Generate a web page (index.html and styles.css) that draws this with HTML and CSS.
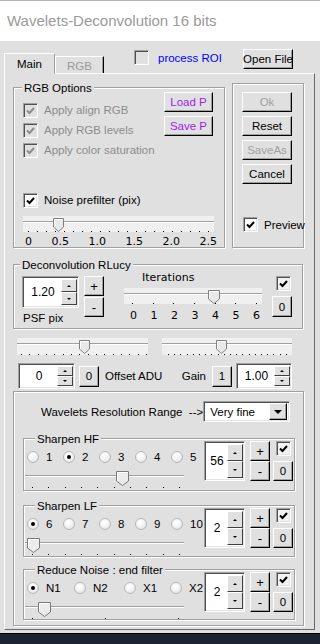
FILE: index.html
```html
<!DOCTYPE html>
<html>
<head>
<meta charset="utf-8">
<title>Wavelets-Deconvolution 16 bits</title>
<link rel="stylesheet" href="styles.css">
</head>
<body>
<div class="win">
  <div class="titlebar">Wavelets-Deconvolution 16 bits</div>
  <div class="client">
    <div class="topstrip">
      <div class="tabs">
        <div class="tab sel">Main</div>
        <div class="tab other">RGB</div>
      </div>
      <div class="roi"><span class="cb graybg"></span><span class="roi-t">process ROI</span></div>
      <div class="btn openfile">Open File</div>
    </div>

    <div class="pane">
      <div class="rowA">
        <div class="group rgbg">
          <div class="legend">RGB Options</div>
          <div class="rgbtop">
            <div class="checks">
              <div class="chkrow dis"><span class="cb graybg"><svg class="ck" viewBox="0 0 11 11"><path d="M2 5.5L4.5 8L9 3" fill="none" stroke="#8c8c8c" stroke-width="2"/></svg></span>Apply align RGB</div>
              <div class="chkrow dis"><span class="cb graybg"><svg class="ck" viewBox="0 0 11 11"><path d="M2 5.5L4.5 8L9 3" fill="none" stroke="#8c8c8c" stroke-width="2"/></svg></span>Apply RGB levels</div>
              <div class="chkrow dis"><span class="cb graybg"><svg class="ck" viewBox="0 0 11 11"><path d="M2 5.5L4.5 8L9 3" fill="none" stroke="#8c8c8c" stroke-width="2"/></svg></span>Apply color saturation</div>
            </div>
            <div class="btncol">
              <div class="btn purple w49">Load P</div>
              <div class="btn purple w49">Save P</div>
            </div>
          </div>
          <div class="chkrow noise"><span class="cb"><svg class="ck" viewBox="0 0 11 11"><path d="M2 5.5L4.5 8L9 3" fill="none" stroke="#000" stroke-width="2"/></svg></span>Noise prefilter (pix)</div>
          <div class="slider light s-noise">
            <div class="track"></div>
            <div class="ticks t-noise"><i></i><i></i><i></i><i></i><i></i><i></i><i></i><i></i><i></i><i></i><i></i><i></i><i></i><i></i><i></i><i></i><i></i><i></i><i></i><i></i><i></i></div>
            <svg class="thumb" style="left:30px" width="11" height="14" viewBox="0 0 11 14"><path d="M0.5 0.5H10.5V9L5.5 13.5L0.5 9Z" fill="#e8e8e8" stroke="#808080"/><path d="M1.5 9V1.5H9.5" fill="none" stroke="#fff"/></svg>
          </div>
          <div class="scale sc-noise"><span>0</span><span>0.5</span><span>1.0</span><span>1.5</span><span>2.0</span><span>2.5</span></div>
        </div>

        <div class="group rightg">
          <div class="btn w50 distext">Ok</div>
          <div class="btn w50">Reset</div>
          <div class="btn w50 distext">SaveAs</div>
          <div class="btn w50">Cancel</div>
          <div class="chkrow preview"><span class="cb"><svg class="ck" viewBox="0 0 11 11"><path d="M2 5.5L4.5 8L9 3" fill="none" stroke="#000" stroke-width="2"/></svg></span>Preview</div>
        </div>
      </div>

      <div class="group decon">
        <div class="legend lg-decon">Deconvolution RLucy</div>
        <div class="dcrow">
          <div class="col1">
            <div class="spin sp-psf"><span class="val">1.20</span><div class="spb"><div class="sb"><i class="up"></i></div><div class="sb"><i class="dn"></i></div></div></div>
            <div class="psf">PSF pix</div>
          </div>
          <div class="pm">
            <div class="btn sq">+</div>
            <div class="btn sq">-</div>
          </div>
          <div class="iter">
            <div class="iter-l">Iterations</div>
            <div class="slider light s-iter">
              <div class="track"></div>
              <div class="ticks t-iter"><i></i><i></i><i></i><i></i><i></i><i></i><i></i></div>
              <svg class="thumb" style="left:84px" width="12" height="14" viewBox="0 0 12 14"><path d="M0.5 0.5H11.5V9L6 13.5L0.5 9Z" fill="#e8e8e8" stroke="#808080"/><path d="M1.5 9V1.5H10.5" fill="none" stroke="#fff"/></svg>
            </div>
            <div class="scale sc-iter"><span>0</span><span>1</span><span>2</span><span>3</span><span>4</span><span>5</span><span>6</span></div>
          </div>
          <div class="cz">
            <span class="cb lightbg"><svg class="ck" viewBox="0 0 11 11"><path d="M2 5.5L4.5 8L9 3" fill="none" stroke="#000" stroke-width="2"/></svg></span>
            <div class="btn sq z21">0</div>
          </div>
        </div>
      </div>

      <div class="sliders">
        <div class="slider light s-c1">
          <div class="track"></div>
          <div class="ticks t-c1"><i></i><i></i><i></i><i></i><i></i><i></i><i></i><i></i><i></i><i></i><i></i><i></i><i></i><i></i><i></i><i></i></div>
          <svg class="thumb" style="left:62px" width="11" height="14" viewBox="0 0 11 14"><path d="M0.5 0.5H10.5V9L5.5 13.5L0.5 9Z" fill="#e8e8e8" stroke="#808080"/><path d="M1.5 9V1.5H9.5" fill="none" stroke="#fff"/></svg>
        </div>
        <div class="slider light s-c2">
          <div class="track"></div>
          <div class="ticks t-c2"><i></i><i></i><i></i><i></i><i></i><i></i><i></i><i></i><i></i><i></i><i></i><i></i><i></i><i></i><i></i><i></i><i></i><i></i><i></i><i></i></div>
          <svg class="thumb" style="left:54px" width="11" height="14" viewBox="0 0 11 14"><path d="M0.5 0.5H10.5V9L5.5 13.5L0.5 9Z" fill="#e8e8e8" stroke="#808080"/><path d="M1.5 9V1.5H9.5" fill="none" stroke="#fff"/></svg>
        </div>
      </div>

      <div class="offrow">
        <div class="spin sp-off"><span class="val">0</span><div class="spb"><div class="sb"><i class="up"></i></div><div class="sb"><i class="dn"></i></div></div></div>
        <div class="btn sq z21 ml4">0</div>
        <span class="offl">Offset ADU</span>
        <span class="spacer"></span>
        <span>Gain</span>
        <div class="btn sq z21 ml6">1</div>
        <div class="spin sp-gain"><span class="val">1.00</span><div class="spb"><div class="sb"><i class="up"></i></div><div class="sb"><i class="dn"></i></div></div></div>
      </div>

      <div class="group wpanel">
        <div class="wrrow">
          <span class="wrl">Wavelets Resolution Range&nbsp; --&gt;</span>
          <div class="dd"><span>Very fine</span><div class="ddbtn"><i class="ddar"></i></div></div>
        </div>

        <div class="group sub hf">
          <div class="legend lg-sub">Sharpen HF</div>
          <div class="subrow">
            <div class="lc">
              <div class="radios">
                <div class="ri"><span class="rb"></span>1</div>
                <div class="ri"><span class="rb on"></span>2</div>
                <div class="ri"><span class="rb"></span>3</div>
                <div class="ri"><span class="rb"></span>4</div>
                <div class="ri"><span class="rb"></span>5</div>
              </div>
              <div class="slider plain">
                <div class="track"></div>
                <div class="ticks t-w10"><i></i><i></i><i></i><i></i><i></i><i></i><i></i><i></i><i></i><i></i></div>
                <svg class="thumb" style="left:91px" width="13" height="15" viewBox="0 0 13 15"><path d="M0.5 0.5H12.5V10L6.5 14.5L0.5 10Z" fill="#ececec" stroke="#7a7a7a"/><path d="M1.5 10V1.5H11.5" fill="none" stroke="#fff"/></svg>
              </div>
            </div>
            <div class="spin sp-w"><span class="val">56</span><div class="spb"><div class="sb"><i class="up"></i></div><div class="sb"><i class="dn"></i></div></div></div>
            <div class="pm2"><div class="btn sq">+</div><div class="btn sq">-</div></div>
            <div class="cz2">
              <span class="cb lightbg"><svg class="ck" viewBox="0 0 11 11"><path d="M2 5.5L4.5 8L9 3" fill="none" stroke="#000" stroke-width="2"/></svg></span>
              <div class="btn sq">0</div>
            </div>
          </div>
        </div>

        <div class="group sub lf">
          <div class="legend lg-sub">Sharpen LF</div>
          <div class="subrow">
            <div class="lc">
              <div class="radios">
                <div class="ri"><span class="rb on"></span>6</div>
                <div class="ri"><span class="rb"></span>7</div>
                <div class="ri"><span class="rb"></span>8</div>
                <div class="ri"><span class="rb"></span>9</div>
                <div class="ri"><span class="rb"></span>10</div>
              </div>
              <div class="slider plain">
                <div class="track"></div>
                <div class="ticks t-w10"><i></i><i></i><i></i><i></i><i></i><i></i><i></i><i></i><i></i><i></i></div>
                <svg class="thumb" style="left:2px" width="13" height="15" viewBox="0 0 13 15"><path d="M0.5 0.5H12.5V10L6.5 14.5L0.5 10Z" fill="#ececec" stroke="#7a7a7a"/><path d="M1.5 10V1.5H11.5" fill="none" stroke="#fff"/></svg>
              </div>
            </div>
            <div class="spin sp-w"><span class="val">2</span><div class="spb"><div class="sb"><i class="up"></i></div><div class="sb"><i class="dn"></i></div></div></div>
            <div class="pm2"><div class="btn sq">+</div><div class="btn sq">-</div></div>
            <div class="cz2">
              <span class="cb lightbg"><svg class="ck" viewBox="0 0 11 11"><path d="M2 5.5L4.5 8L9 3" fill="none" stroke="#000" stroke-width="2"/></svg></span>
              <div class="btn sq">0</div>
            </div>
          </div>
        </div>

        <div class="group sub rn">
          <div class="legend lg-sub">Reduce Noise : end filter</div>
          <div class="subrow">
            <div class="lc">
              <div class="radios">
                <div class="ri r47"><span class="rb on"></span>N1</div>
                <div class="ri r50"><span class="rb"></span>N2</div>
                <div class="ri r46"><span class="rb"></span>X1</div>
                <div class="ri"><span class="rb"></span>X2</div>
              </div>
              <div class="slider plain">
                <div class="track"></div>
                <div class="ticks t-w3"><i></i><i></i><i></i></div>
                <svg class="thumb" style="left:13px" width="13" height="15" viewBox="0 0 13 15"><path d="M0.5 0.5H12.5V10L6.5 14.5L0.5 10Z" fill="#ececec" stroke="#7a7a7a"/><path d="M1.5 10V1.5H11.5" fill="none" stroke="#fff"/></svg>
              </div>
            </div>
            <div class="spin sp-w"><span class="val">2</span><div class="spb"><div class="sb"><i class="up"></i></div><div class="sb"><i class="dn"></i></div></div></div>
            <div class="pm2"><div class="btn sq">+</div><div class="btn sq">-</div></div>
            <div class="cz2">
              <span class="cb lightbg"><svg class="ck" viewBox="0 0 11 11"><path d="M2 5.5L4.5 8L9 3" fill="none" stroke="#000" stroke-width="2"/></svg></span>
              <div class="btn sq">0</div>
            </div>
          </div>
        </div>
      </div>
    </div>
  </div>
  <div class="taskbar"></div>
</div>
</body>
</html>
```

FILE: styles.css
```css
* { box-sizing: border-box; margin: 0; padding: 0; }
body {
  width: 320px; height: 644px; overflow: hidden;
  font-family: "Liberation Sans", Arial, sans-serif;
  font-size: 11.5px; color: #000; background: #e0e0e0;
}
.win { width: 320px; height: 644px; display: flex; flex-direction: column; }
.titlebar {
  height: 41px; flex: none; background: #fff; border-top: 1px solid #b4b4b4;
  padding-left: 7px; font-size: 15px; line-height: 40px; color: #9a9a9a;
}
.client { height: 592px; flex: none; background: #e0e0e0; display: flex; flex-direction: column; }
.taskbar { height: 11px; flex: none; background: #1c2433; border-top: 1px solid #000; }

/* top strip with tabs */
.topstrip { height: 32px; display: flex; align-items: flex-start; }
.tabs { display: flex; align-items: flex-end; align-self: flex-end; margin-left: 4px; }
.tab {
  height: 17px; width: 49px; background: #e0e0e0;
  border: 1px solid; border-color: #fff #000 transparent #fff; border-bottom: 0;
  box-shadow: inset -1px 0 #a0a0a0;
  display: flex; align-items: center; justify-content: center; color: #9a9a9a;
  padding-top: 1px;
}
.tab.sel {
  width: 51px; height: 21px; margin-bottom: -1px; position: relative; z-index: 1;
  color: #000; border-right-color: #a0a0a0; box-shadow: none; padding-top: 0; padding-bottom: 1px;
}
.roi { display: flex; align-items: center; margin: 9px 0 0 30px; gap: 9px; }
.roi-t { color: #0000ff; }
.openfile { margin: 8px 27px 0 auto; width: 50px; }

/* generic widgets */
.btn {
  height: 20px; background: #e0e0e0;
  border: 1px solid; border-color: #fff #000 #000 #fff;
  box-shadow: inset -1px -1px #a0a0a0;
  display: flex; align-items: center; justify-content: center;
  white-space: nowrap; flex: none;
}
.w49 { width: 49px; }
.w50 { width: 50px; }
.sq { width: 20px; }
.z21 { height: 21px; }
.ml4 { margin-left: 4px; }
.ml6 { margin-left: 6px; }
.purple { color: #a020f0; }
.distext { color: #a0a0a0; }

.cb {
  width: 15px; height: 15px; flex: none; background: #fff;
  border: 1px solid; border-color: #a0a0a0 #fff #fff #a0a0a0;
  box-shadow: inset 1px 1px #505050, inset -1px -1px #e3e3e3;
  display: flex; align-items: center; justify-content: center;
}
.cb.graybg { background: #e0e0e0; }
.cb.lightbg { background: #f2f2f2; }
.ck { width: 11px; height: 11px; display: block; }

.group {
  border: 1px solid #a0a0a0;
  box-shadow: inset 1px 1px #fff, 1px 1px #fff;
  flex: none;
}
.legend {
  width: fit-content; background: #e0e0e0; padding: 0 2px;
  height: 14px; line-height: 14px; margin: -7px 0 -7px 8px; white-space: nowrap;
}

.chkrow { display: flex; align-items: center; height: 20px; gap: 6px; white-space: nowrap; }
.chkrow.dis { color: #8c8c8c; }

/* sliders */
.slider { position: relative; flex: none; }
.slider.light { background: #f0f0f0; padding-top: 5px; }
.slider.plain { padding-top: 6px; }
.track { height: 2px; border-top: 1px solid #a0a0a0; border-bottom: 1px solid #fff; }
.ticks { display: flex; justify-content: space-between; }
.ticks i { display: block; width: 1px; height: 1px; background: #000; }
.thumb { position: absolute; top: 2px; display: block; }
.scale { display: flex; justify-content: space-between; height: 14px; line-height: 14px; font-family: "DejaVu Sans", sans-serif; font-size: 11px; }

/* spin edit */
.spin {
  display: flex; background: #fff; flex: none;
  border: 1px solid; border-color: #a0a0a0 #fff #fff #a0a0a0;
  box-shadow: inset 1px 1px #505050, inset -1px -1px #e3e3e3;
  padding: 2px 1px 2px 2px;
}
.spin .val { flex: 1; display: flex; align-items: center; justify-content: center; font-size: 12px; }
.spb { width: 16px; display: flex; flex-direction: column; }
.sb {
  flex: 1; background: #e0e0e0;
  border: 1px solid; border-color: #fff #404040 #404040 #fff;
  display: flex; align-items: center; justify-content: center;
}
.sb .up { display: block; width: 0; height: 0; border-left: 2px solid transparent; border-right: 2px solid transparent; border-bottom: 2px solid #000; }
.sb .dn { display: block; width: 0; height: 0; border-left: 2px solid transparent; border-right: 2px solid transparent; border-top: 2px solid #000; }

/* pane */
.pane {
  width: 311px; height: 557px; margin-left: 4px;
  border: 1px solid; border-color: #fff #696969 #696969 #fff;
  padding-left: 8px;
}
.rowA { display: flex; align-items: flex-start; gap: 7px; margin-top: 9px; }
.rgbg { width: 212px; height: 161px; margin-top: 4px; }
.rgbtop { display: flex; margin-top: 4px; padding-left: 9px; }
.checks { width: 141px; padding-top: 8px; }
.btncol { display: flex; flex-direction: column; gap: 4px; }
.noise { margin: 30px 0 0 9px; }
.s-noise { width: 191px; height: 16px; margin: 6px 0 0 9px; }
.t-noise { margin: 8px 5px 0 5px; }
.sc-noise { width: 192px; margin: 3px 0 0 11px; }

.rightg { width: 72px; height: 165px; padding: 8px 0 0 9px; display: flex; flex-direction: column; gap: 4px; }
.preview { margin: 29px 0 0 1px; height: 15px; }

.decon { width: 290px; height: 65px; margin-top: 16px; }
.lg-decon { margin-left: 6px; }
.dcrow { display: flex; margin-top: 11px; padding-left: 8px; }
.sp-psf { width: 57px; height: 32px; }
.psf { margin-top: 3px; height: 14px; line-height: 14px; padding-left: 1px; }
.pm { margin-left: 5px; display: flex; flex-direction: column; gap: 1px; }
.pm .btn, .pm2 .btn { font-size: 13px; }
.iter { margin: -5px 0 0 20px; width: 138px; }
.iter-l { height: 14px; line-height: 14px; padding-left: 18px; font-family: "DejaVu Sans", sans-serif; font-size: 11px; }
.s-iter { width: 138px; height: 16px; margin-top: 3px; }
.t-iter { margin: 8px 5px 0 8px; }
.sc-iter { width: 130px; margin: 5px 0 0 6px; }
.cz { margin-left: 10px; display: flex; flex-direction: column; }
.cz .cb { margin-left: 4px; }
.cz .btn { margin-top: 5px; }

.sliders { display: flex; gap: 14px; margin: 9px 0 0 4px; }
.s-c1 { width: 131px; height: 17px; }
.s-c2 { width: 130px; height: 17px; }
.t-c1 { margin: 9px 1px 0 4px; }
.t-c2 { margin: 9px 5px 0 6px; }

.offrow { display: flex; align-items: center; width: 274px; height: 26px; margin: 8px 0 0 5px; }
.sp-off { width: 57px; height: 26px; }
.sp-gain { width: 56px; height: 26px; margin-left: 4px; }
.offl { margin-left: 6px; }
.spacer { flex: 1; }

.wpanel { width: 291px; height: 235px; margin-top: 2px; }
.wrrow { display: flex; align-items: center; height: 21px; margin-top: 9px; padding: 0 13px 0 27px; }
.wrl { white-space: pre; }
.dd {
  margin-left: auto; width: 90px; height: 21px; background: #fff;
  border: 1px solid; border-color: #a0a0a0 #fff #fff #a0a0a0;
  box-shadow: inset 1px 1px #505050, inset -1px -1px #e3e3e3;
  display: flex; align-items: center; justify-content: space-between; padding: 0 2px 0 6px;
}
.ddbtn {
  width: 18px; height: 17px; background: #e0e0e0;
  border: 1px solid; border-color: #fff #000 #000 #fff; box-shadow: inset -1px -1px #a0a0a0;
  display: flex; align-items: center; justify-content: center;
}
.ddar { display: block; width: 0; height: 0; border-left: 4px solid transparent; border-right: 4px solid transparent; border-top: 4px solid #000; }

.sub { width: 272px; margin-left: 9px; }
.hf { height: 53px; margin-top: 16px; }
.lf { height: 52px; margin-top: 14px; }
.rn { height: 51px; margin-top: 12px; }
.lg-sub { margin-left: 11px; }
.subrow { display: flex; margin-top: 2px; }
.lc { width: 180px; padding-top: 9px; }
.radios { display: flex; height: 14px; padding-left: 3px; }
.ri { display: flex; align-items: center; width: 36px; flex: none; white-space: nowrap; }
.ri.r47 { width: 47px; }
.ri.r50 { width: 50px; }
.ri.r46 { width: 46px; }
.rb {
  width: 12px; height: 12px; border-radius: 50%; margin-right: 7px; flex: none;
  border: 1px solid #b8b8b8;
  background: radial-gradient(circle at 40% 35%, #ffffff 0%, #f4f4f4 45%, #d8d8d8 100%);
  display: flex; align-items: center; justify-content: center;
}
.rb.on::after { content: ""; width: 4px; height: 4px; border-radius: 50%; background: #000; }
.slider.plain { width: 159px; height: 21px; margin: 5px 0 0 1px; }
.t-w10 { margin: 10px 4px 0 7px; }
.t-w3 { margin: 10px 5px 0 7px; }
.sp-w { width: 41px; height: 40px; }
.pm2 { margin-left: 5px; display: flex; flex-direction: column; }
.cz2 { margin-left: 3px; display: flex; flex-direction: column; }
.cz2 .cb { margin-left: 3px; }
.cz2 .btn { margin-top: 5px; }
```
